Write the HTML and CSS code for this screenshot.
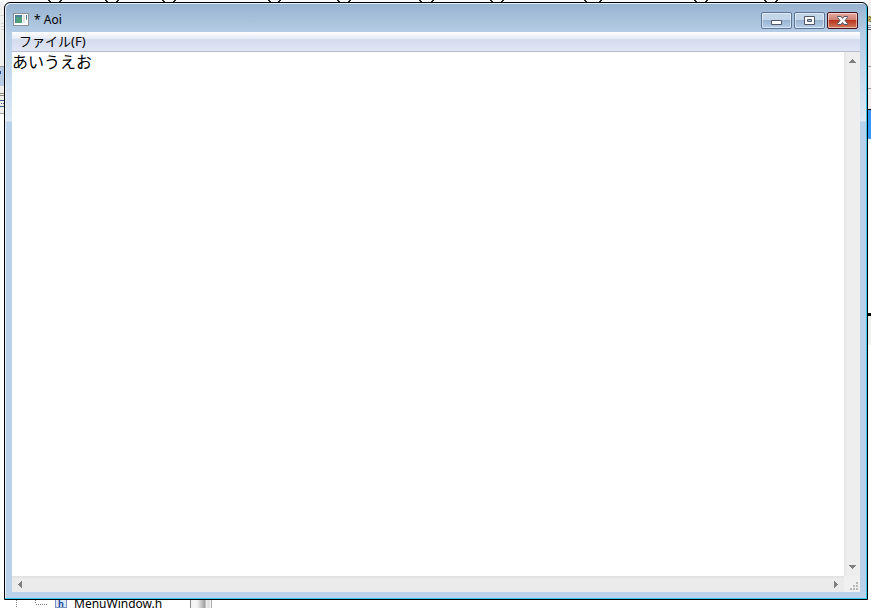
FILE: index.html
```
<!DOCTYPE html>
<html lang="ja">
<head>
  <meta charset="UTF-8">
  <meta name="viewport" content="width=device-width, initial-scale=1.0">
  <title>* Aoi</title>
  <link rel="stylesheet" href="styles.css">
</head>
<body>
  <div class="desktop">

    <!-- Strips of the window behind -->
    <div class="behind behind-top">
      <svg width="867" height="2" viewBox="0 0 867 2" aria-hidden="true">
        <path class="ink" d="M48 0h2v1h1v1h-2v-1h-1zM60 0h2v1h-1v1h-2v-1h1zM105 0h2v1h1v1h-2v-1h-1zM117 0h2v1h-1v1h-2v-1h1zM162 0h2v1h1v1h-2v-1h-1zM174 0h2v1h-1v1h-2v-1h1zM268 0h2v1h1v1h-2v-1h-1zM279 0h2v1h-1v1h-2v-1h1zM337 0h2v1h1v1h-2v-1h-1zM349 0h2v1h-1v1h-2v-1h1zM419 0h2v1h1v1h-2v-1h-1zM432 0h2v1h-1v1h-2v-1h1zM490 0h2v1h1v1h-2v-1h-1zM502 0h2v1h-1v1h-2v-1h1zM584 0h2v1h1v1h-2v-1h-1zM600 0h2v1h-1v1h-2v-1h1zM694 0h2v1h1v1h-2v-1h-1zM706 0h2v1h-1v1h-2v-1h1zM764 0h2v1h1v1h-2v-1h-1zM776 0h2v1h-1v1h-2v-1h1z"/>
      </svg>
    </div>

    <div class="behind behind-left">
      <svg width="4" height="120" viewBox="0 0 4 120" aria-hidden="true">
        <path fill="#f0f0f0" d="M0 0h4v64H0z"/>
        <path fill="#d4d4d4" d="M0 13h4v1H0zM1 21h3v1H1zM1 24h3v1H1zM1 27h3v1H1z"/>
        <path fill="#9a9a9a" d="M0 64h4v1H0z"/>
        <path fill="#b7cbe3" d="M0 65h4v19H0z"/>
        <path fill="#1e4f9c" d="M0 69h1v3H0z"/>
        <path fill="#f0eeea" d="M0 84h4v27H0z"/>
        <path fill="#8a8a72" d="M0 91h4v1H0zM0 93h4v1H0z"/>
        <path fill="#3c5a92" d="M0 98h4v1H0zM1 101h1v1h-1zM3 101h1v1h-1zM0 104h4v1H0z"/>
        <path fill="#a0a0a0" d="M0 111h4v1H0z"/>
      </svg>
    </div>

    <main class="window">
      <header class="titlebar">
        <svg class="app-icon" width="16" height="16" viewBox="0 0 16 16" aria-hidden="true">
          <path fill="#8c9296" d="M0 1h16v13H0z"/>
          <path fill="#fff" d="M1 2h14v11H1z"/>
          <path fill="#4a80a0" d="M2 3h7v8H2z"/>
          <path fill="#4fa07a" d="M3 5h6v6H3z"/>
          <path fill="#dfe3e6" d="M10 3h2v8h-2z"/>
          <path fill="#3b6fb0" d="M13 3h1v3h-1z"/>
          <path fill="#5fa070" d="M13 6h1v2h-1z"/>
        </svg>
        <h1 class="title">* Aoi</h1>
        <div class="window-buttons">
          <button class="window-button" type="button" aria-label="最小化">
            <svg width="29" height="15" viewBox="0 0 29 15" aria-hidden="true">
              <path fill="#fff" stroke="#535666" d="M9.500 7.500h10v4h-10z"/>
            </svg>
          </button>
          <button class="window-button" type="button" aria-label="最大化">
            <svg width="29" height="15" viewBox="0 0 29 15" aria-hidden="true">
              <path fill="#fff" stroke="#535666" d="M9.500 3.500h10v8h-10z"/>
              <path fill="#a4bdd8" stroke="#535666" d="M12.500 6.500h4v2h-4z"/>
            </svg>
          </button>
          <button class="window-button close" type="button" aria-label="閉じる">
            <svg width="29" height="15" viewBox="0 0 29 15" aria-hidden="true">
              <path fill="#f5f5f5" stroke="#535666" d="M9.500 3.500h3.500l1.500 2 1.500-2h3.500v1l-2.500 3 2.500 3v1h-3.500l-1.500-2-1.500 2h-3.500v-1l2.500-3-2.500-3z"/>
            </svg>
          </button>
        </div>
      </header>

      <div class="client">
        <nav class="menubar">
          <button class="menu-item" type="button">ファイル(F)</button>
        </nav>
        <div class="editor">
          <textarea class="editor-text" aria-label="テキスト" spellcheck="false">あいうえお</textarea>
          <div class="scrollbar vertical">
            <button class="scroll-arrow" type="button" aria-label="上へスクロール">
              <svg width="7" height="4" viewBox="0 0 7 4" aria-hidden="true"><path d="M3 0h1v1h1v1h1v1h1v1H0V3h1V2h1V1h1z"/></svg>
            </button>
            <button class="scroll-arrow" type="button" aria-label="下へスクロール">
              <svg width="7" height="4" viewBox="0 0 7 4" aria-hidden="true"><path d="M0 0h7v1H6v1H5v1H4v1H3V3H2V2H1V1H0z"/></svg>
            </button>
          </div>
          <div class="scrollbar horizontal">
            <button class="scroll-arrow" type="button" aria-label="左へスクロール">
              <svg width="4" height="7" viewBox="0 0 4 7" aria-hidden="true"><path d="M4 0v7H3V6H2V5H1V4H0V3h1V2h1V1h1V0z"/></svg>
            </button>
            <button class="scroll-arrow" type="button" aria-label="右へスクロール">
              <svg width="4" height="7" viewBox="0 0 4 7" aria-hidden="true"><path d="M0 0v7h1V6h1V5h1V4h1V3H3V2H2V1H1V0z"/></svg>
            </button>
          </div>
          <div class="grip">
            <svg width="8" height="8" viewBox="0 0 8 8" aria-hidden="true">
              <path fill="#b8b8b8" d="M6 0h2v2H6zM3 3h2v2H3zM6 3h2v2H6zM0 6h2v2H0zM3 6h2v2H3zM6 6h2v2H6z"/>
            </svg>
          </div>
        </div>
      </div>
    </main>

    <div class="behind behind-right">
      <svg width="3" height="360" viewBox="0 0 3 360" aria-hidden="true">
        <path fill="#f0eeee" d="M0 0h3v107H0z"/>
        <path fill="#c9b458" d="M0 14h3v6H0z"/>
        <path fill="#555" d="M1 14h1v1H1zM2 15h1v1H2zM1 17h1v1H1zM2 19h1v1H2z"/>
        <path fill="#7f8fa8" d="M0 23h3v1H0zM0 25h3v1H0z"/>
        <path fill="#555" d="M0 27h3v1H0z"/>
        <path fill="#9a9a9a" d="M0 64h3v1H0zM0 86h3v1H0z"/>
        <path fill="#000" d="M0 107h3v1H0zM0 311h3v3H0z"/>
        <path fill="#3399ff" d="M0 108h3v29H0z"/>
        <path fill="#f0f0f0" d="M0 314h3v29H0z"/>
      </svg>
    </div>

    <div class="behind behind-bottom">
      <svg width="51" height="8" viewBox="0 0 51 8" aria-hidden="true">
        <path fill="none" stroke="#808080" stroke-dasharray="1 1" d="M16.500 0v8M35.500 0v4M36 4.500h11"/>
      </svg>
      <span class="file-icon">h</span>
      <span class="file-name">MenuWindow.h</span>
      <span class="splitter"></span>
    </div>

  </div>
</body>
</html>
```

FILE: styles.css
```
* {
  box-sizing: border-box;
}

body {
  margin: 0;
  font-family: "Noto Sans", "Noto Sans CJK JP", sans-serif;
  font-size: 12px;
  color: #000;
}

button {
  padding: 0;
  border: none;
  background: none;
  font: inherit;
  color: inherit;
}

svg {
  display: block;
}

.desktop {
  display: grid;
  grid-template-columns: 4px 1fr 3px;
  grid-template-rows: 2px 1fr 8px;
  height: 100vh;
  background-color: #fff;
  overflow: hidden;
}

/* Window behind */
.behind {
  overflow: hidden;
}

.behind-top {
  grid-column: 1 / 4;
  background-color: #fafafa;
}

.ink {
  fill: #222;
}

.behind-bottom {
  grid-column: 1 / 4;
  display: flex;
  align-items: flex-start;
}

.file-icon {
  width: 12px;
  height: 8px;
  margin-left: 4px;
  border: 1px solid #7b94bd;
  border-top: none;
  background-color: #dce8f8;
  font-size: 9px;
  font-weight: bold;
  line-height: 7px;
  text-align: center;
  color: #1c4f9c;
}

.file-name {
  width: 116px;
  margin-left: 7px;
  line-height: 7px;
}

.splitter {
  width: 22px;
  height: 8px;
  border-left: 1px solid #888;
  border-right: 1px solid #aaa;
  background: linear-gradient(to right, #f4f4f4 6px, #b4b4b4 12px, #999 14px, #eee 15px, #ddd 18px, #fff);
}

/* Main window */
.window {
  display: flex;
  flex-direction: column;
  min-height: 0;
  padding: 0 7px 7px;
  border: 1px solid #000;
  border-radius: 6px 6px 0 0;
  background: linear-gradient(#98b3d1, #b5cde5 30px, #dce8f5 118px, #b9d1ea 119px);
  box-shadow: inset -1px -1px #35c5e8, inset 1px 1px #e6f1fa;
}

.titlebar {
  display: flex;
  align-items: center;
  height: 29px;
  padding: 5px 2px 0 1px;
}

.title {
  flex: 1;
  margin: 0 0 0 5px;
  font-size: 12px;
  font-weight: normal;
  line-height: 16px;
}

.window-buttons {
  display: flex;
  gap: 2px;
}

.window-button {
  width: 31px;
  height: 17px;
  border: 1px solid #5d7595;
  border-radius: 2px;
  background: linear-gradient(#c3d5e8 0 45%, #98b3d0 50%, #b5cee8);
  box-shadow: inset 0 0 0 1px rgba(255, 255, 255, 0.5);
}

.window-button.close {
  border-color: #4b1019;
  background: linear-gradient(#e5aa9f, #d18173 45%, #b8361c 50%, #d17a5d);
}

.client {
  flex: 1;
  display: flex;
  flex-direction: column;
  min-height: 0;
  background-color: #fff;
}

.menubar {
  height: 20px;
  padding: 0 7px;
  border-bottom: 1px solid #b6bccc;
  background: linear-gradient(#fff, #e6eaf5 35%, #d4dbed 40%, #e1e6f6);
}

.menu-item {
  display: block;
  font-size: 13px;
  line-height: 19px;
}

.editor {
  flex: 1;
  display: grid;
  grid-template-columns: 1fr 16px;
  grid-template-rows: 1fr 16px;
  min-height: 0;
}

.editor-text {
  width: 100%;
  height: 100%;
  padding: 0;
  border: none;
  outline: none;
  resize: none;
  overflow: hidden;
  font-family: "Noto Sans CJK JP", sans-serif;
  font-size: 16px;
  line-height: 18px;
  color: #000;
}

.scrollbar {
  display: flex;
  justify-content: space-between;
}

.scrollbar.vertical {
  flex-direction: column;
  background: linear-gradient(to right, #e3e3e3, #eee 3px);
}

.scrollbar.horizontal {
  background: linear-gradient(#e0e0e0, #ebebeb 3px);
}

.scroll-arrow {
  display: flex;
  align-items: center;
  justify-content: center;
  width: 16px;
  height: 16px;
  fill: #808080;
}

.vertical .scroll-arrow {
  height: 18px;
}

.grip {
  display: flex;
  align-items: flex-end;
  justify-content: flex-end;
  padding: 2px;
  background-color: #f0f0f0;
}
```
